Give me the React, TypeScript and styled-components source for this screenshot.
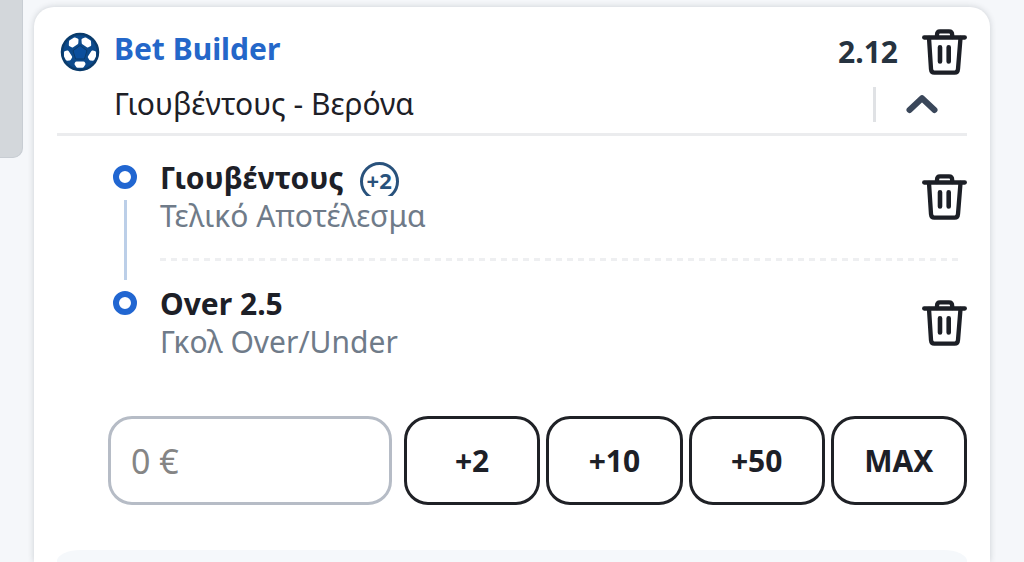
import React from "react";
import styled, { createGlobalStyle } from "styled-components";

const GlobalStyle = createGlobalStyle`
  *, *::before, *::after { box-sizing: border-box; }
  body {
    margin: 0;
    background: #f5f7fa;
    color: #1d2027;
    font-family: "Noto Sans", "Open Sans", sans-serif;
    font-size: 30px;
    line-height: 38px;
  }
  h2, h3, p, ul { margin: 0; padding: 0; font-size: inherit; font-weight: inherit; }
  ul { list-style: none; }
  button, input { font: inherit; color: inherit; margin: 0; }
`;

const Page = styled.div`
  display: flex;
  align-items: stretch;
  gap: 11px;
  min-height: 100vh;
  padding-right: 34px;
`;

const SideTab = styled.div`
  flex: none;
  width: 23px;
  height: 158px;
  background: #d3d7db;
  border: solid #c8cdd3;
  border-width: 0 1px 1px 0;
  border-bottom-right-radius: 10px;
`;

const Card = styled.main`
  flex: 1;
  min-width: 0;
  display: flex;
  flex-direction: column;
  margin-top: 7px;
  padding: 22px 23px 0;
  background: #fff;
  border-radius: 20px 20px 0 0;
  box-shadow: 0 0 6px rgba(40, 50, 60, 0.2);
`;

const Header = styled.header`
  border-bottom: 3px solid #ebecee;
`;

const HeaderRow = styled.div`
  display: flex;
  align-items: center;
`;

const BallSlot = styled.span`
  display: flex;
  flex: none;
  width: 57px;
  padding-left: 3px;
`;

const Title = styled.h2`
  flex: 1;
  padding-bottom: 6px;
  color: #2467c9;
  font-weight: 700;
`;

const Odds = styled.span`
  margin-right: 24px;
  color: #263340;
  font-weight: 700;
`;

const Match = styled.p`
  flex: 1;
  padding: 10px 0 10px 57px;
`;

const IconButton = styled.button`
  display: flex;
  flex: none;
  padding: 0;
  border: 0;
  background: none;
  cursor: pointer;
`;

const ToggleArea = styled.div`
  display: flex;
  align-items: center;
  justify-content: center;
  width: 94px;
  height: 35px;
  border-left: 3px solid #e0e2e5;
`;

const Selections = styled.section`
  display: flex;
  gap: 23px;
  padding-left: 56px;
`;

const Rail = styled.div`
  display: flex;
  flex-direction: column;
  align-items: center;
  gap: 11px;
  padding: 29px 0 46px;
`;

const Ring = styled.span`
  width: 24px;
  height: 24px;
  border: 6px solid #2166d1;
  border-radius: 50%;
`;

const RailLine = styled.span`
  flex: 1;
  width: 3px;
  background: #bccfe8;
`;

const LegList = styled.ul`
  flex: 1;
  min-width: 0;
`;

const Leg = styled.li`
  display: flex;
  align-items: center;
  justify-content: space-between;
  padding-top: 24px;

  &:first-child { padding: 23px 0; }
`;

const DashedLine = styled.li`
  height: 3px;
  margin-right: 4px;
  background: repeating-linear-gradient(90deg, #eeeff1 0 6px, transparent 6px 11px);
`;

const LegName = styled.h3`
  display: flex;
  gap: 16px;
  font-weight: 700;
`;

const LegMarket = styled.p`
  color: #6f7b89;
`;

const BadgeClip = styled.span`
  height: 37px;
  padding-top: 3px;
  overflow: hidden;
`;

const Badge = styled.span`
  display: block;
  width: 39px;
  height: 39px;
  border: 3px solid #29527c;
  border-radius: 50%;
  color: #29527c;
  font-size: 22px;
  line-height: 30px;
  text-align: center;
`;

const StakeRow = styled.form`
  display: grid;
  grid-template-columns: 284fr 563fr;
  gap: 12px;
  margin: 55px 0 45px;
  padding-left: 51px;
`;

const StakeInput = styled.input`
  min-width: 0;
  height: 89px;
  padding: 0 20px;
  border: 3px solid #b6bcc6;
  border-radius: 24px;
  background: #fff;
  font-size: 34px;

  &::placeholder { color: #858585; opacity: 1; }
`;

const QuickStakes = styled.div`
  display: grid;
  grid-template-columns: repeat(4, 1fr);
  gap: 6px;
`;

const StakeButton = styled.button`
  height: 89px;
  padding: 0;
  border: 3px solid #1f2126;
  border-radius: 24px;
  background: #fff;
  font-weight: 700;
  cursor: pointer;
`;

const NextPanel = styled.div`
  flex: 1;
  min-height: 11px;
  background: #f5f8fb;
  border-radius: 24px 24px 0 0 / 11px 11px 0 0;
`;

const BallIcon = () => (
  <svg width="40" height="40" viewBox="0 0 40 40" aria-hidden="true">
    <circle cx="20" cy="20" r="18" fill="#0c4a8c" stroke="#0a3b6b" strokeWidth="2.500" />
    <path d="M20 13.500l7 5.200-2.600 8.300h-8.800L13 18.700z" fill="#0b4f9d" stroke="#0a3b6b" />
    <g fill="#fff" stroke="#fff" strokeWidth="3" strokeLinejoin="round">
      <path d="M10.500 9.500l4-2.500 2.500 1-.2 3-4.500 3-2-1z" />
      <path d="M29.500 9.500l-4-2.500-2.500 1 .2 3 4.500 3 2-1z" />
      <path d="M5.500 20.500l2-.5 3.200 5-1.200 2-2.500.2-1.500-3z" />
      <path d="M34.500 20.500l-2-.5-3.200 5 1.200 2 2.500.2 1.500-3z" />
      <path d="M16.500 31h7l.5 1-1.500 2.300h-5l-1.500-2.300z" />
    </g>
  </svg>
);

const TrashIcon = () => (
  <svg
    width="45"
    height="46"
    viewBox="0 0 45 46"
    fill="none"
    stroke="#1c1f26"
    strokeWidth="4.300"
    strokeLinecap="round"
    strokeLinejoin="round"
    aria-hidden="true"
  >
    <path d="M2.200 8.500h40.600" />
    <path d="M15 8V6Q15 2.400 18 2.400h9Q30.200 2.400 30.200 6V8" />
    <path d="M7 9l2 31Q9.300 43.600 12.300 43.600h20.400Q35.700 43.600 36 40L38.500 9" />
    <path d="M18 18.300v14.200M26.700 18.300v14.200" strokeWidth="4.600" />
  </svg>
);

const ChevronIcon = () => (
  <svg
    width="32"
    height="20"
    viewBox="0 0 32 20"
    fill="none"
    stroke="#3a475a"
    strokeWidth="6"
    strokeLinecap="round"
    strokeLinejoin="round"
    aria-hidden="true"
  >
    <path d="M3.500 16L16 4.200 28.500 16" />
  </svg>
);

const legs = [
  { name: "Γιουβέντους", market: "Τελικό Αποτέλεσμα", badge: "+2" },
  { name: "Over 2.5", market: "Γκολ Over/Under" },
];

const quickStakes = ["+2", "+10", "+50", "MAX"];

export default function App() {
  return (
    <>
      <GlobalStyle />
      <Page>
        <SideTab />
        <Card>
          <Header>
            <HeaderRow>
              <BallSlot><BallIcon /></BallSlot>
              <Title>Bet Builder</Title>
              <Odds>2.12</Odds>
              <IconButton type="button" aria-label="Διαγραφή"><TrashIcon /></IconButton>
            </HeaderRow>
            <HeaderRow>
              <Match>Γιουβέντους - Βερόνα</Match>
              <ToggleArea>
                <IconButton type="button" aria-label="Σύμπτυξη"><ChevronIcon /></IconButton>
              </ToggleArea>
            </HeaderRow>
          </Header>

          <Selections>
            <Rail>
              <Ring />
              <RailLine />
              <Ring />
            </Rail>
            <LegList>
              {legs.map((leg, i) => (
                <React.Fragment key={leg.name}>
                  {i > 0 && <DashedLine role="separator" />}
                  <Leg>
                    <div>
                      <LegName>
                        {leg.name}
                        {leg.badge && <BadgeClip><Badge>{leg.badge}</Badge></BadgeClip>}
                      </LegName>
                      <LegMarket>{leg.market}</LegMarket>
                    </div>
                    <IconButton type="button" aria-label={`Διαγραφή ${leg.name}`}>
                      <TrashIcon />
                    </IconButton>
                  </Leg>
                </React.Fragment>
              ))}
            </LegList>
          </Selections>

          <StakeRow onSubmit={(e) => e.preventDefault()}>
            <StakeInput placeholder="0 €" inputMode="decimal" aria-label="Ποσό" />
            <QuickStakes>
              {quickStakes.map((label) => (
                <StakeButton key={label} type="button">{label}</StakeButton>
              ))}
            </QuickStakes>
          </StakeRow>

          <NextPanel />
        </Card>
      </Page>
    </>
  );
}
